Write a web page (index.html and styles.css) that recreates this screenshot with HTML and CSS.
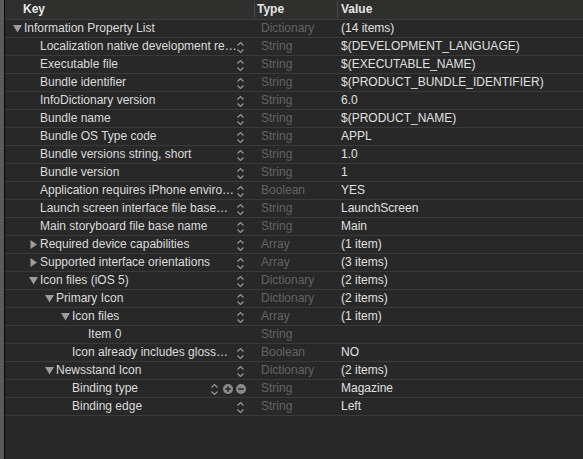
FILE: index.html
```html
<!DOCTYPE html>
<html>
<head>
<meta charset="utf-8">
<link rel="stylesheet" href="styles.css">
</head>
<body>
<div class="window">
  <div class="gutter"></div>
  <div class="plist">
    <div class="header">
      <div class="h-key">Key</div>
      <div class="h-type">Type</div>
      <div class="h-value">Value</div>
    </div>

    <div class="row">
      <div class="key lvl0"><svg class="disc" width="9" height="9" viewBox="0 0 9 9"><polygon points="0,1 9,1 4.5,8.5"/></svg><span class="name">Information Property List</span></div>
      <div class="type">Dictionary</div><div class="value">(14 items)</div>
    </div>
    <div class="row">
      <div class="key lvl1"><span class="disc"></span><span class="name">Localization native development re…</span><svg class="stepper" width="7" height="11" viewBox="0 0 7 11"><path d="M0.5 3.5 L3.5 0.6 L6.5 3.5 M0.5 7.5 L3.5 10.4 L6.5 7.5"/></svg></div>
      <div class="type">String</div><div class="value">$(DEVELOPMENT_LANGUAGE)</div>
    </div>
    <div class="row">
      <div class="key lvl1"><span class="disc"></span><span class="name">Executable file</span><svg class="stepper" width="7" height="11" viewBox="0 0 7 11"><path d="M0.5 3.5 L3.5 0.6 L6.5 3.5 M0.5 7.5 L3.5 10.4 L6.5 7.5"/></svg></div>
      <div class="type">String</div><div class="value">$(EXECUTABLE_NAME)</div>
    </div>
    <div class="row">
      <div class="key lvl1"><span class="disc"></span><span class="name">Bundle identifier</span><svg class="stepper" width="7" height="11" viewBox="0 0 7 11"><path d="M0.5 3.5 L3.5 0.6 L6.5 3.5 M0.5 7.5 L3.5 10.4 L6.5 7.5"/></svg></div>
      <div class="type">String</div><div class="value">$(PRODUCT_BUNDLE_IDENTIFIER)</div>
    </div>
    <div class="row">
      <div class="key lvl1"><span class="disc"></span><span class="name">InfoDictionary version</span><svg class="stepper" width="7" height="11" viewBox="0 0 7 11"><path d="M0.5 3.5 L3.5 0.6 L6.5 3.5 M0.5 7.5 L3.5 10.4 L6.5 7.5"/></svg></div>
      <div class="type">String</div><div class="value">6.0</div>
    </div>
    <div class="row">
      <div class="key lvl1"><span class="disc"></span><span class="name">Bundle name</span><svg class="stepper" width="7" height="11" viewBox="0 0 7 11"><path d="M0.5 3.5 L3.5 0.6 L6.5 3.5 M0.5 7.5 L3.5 10.4 L6.5 7.5"/></svg></div>
      <div class="type">String</div><div class="value">$(PRODUCT_NAME)</div>
    </div>
    <div class="row">
      <div class="key lvl1"><span class="disc"></span><span class="name">Bundle OS Type code</span><svg class="stepper" width="7" height="11" viewBox="0 0 7 11"><path d="M0.5 3.5 L3.5 0.6 L6.5 3.5 M0.5 7.5 L3.5 10.4 L6.5 7.5"/></svg></div>
      <div class="type">String</div><div class="value">APPL</div>
    </div>
    <div class="row">
      <div class="key lvl1"><span class="disc"></span><span class="name">Bundle versions string, short</span><svg class="stepper" width="7" height="11" viewBox="0 0 7 11"><path d="M0.5 3.5 L3.5 0.6 L6.5 3.5 M0.5 7.5 L3.5 10.4 L6.5 7.5"/></svg></div>
      <div class="type">String</div><div class="value">1.0</div>
    </div>
    <div class="row">
      <div class="key lvl1"><span class="disc"></span><span class="name">Bundle version</span><svg class="stepper" width="7" height="11" viewBox="0 0 7 11"><path d="M0.5 3.5 L3.5 0.6 L6.5 3.5 M0.5 7.5 L3.5 10.4 L6.5 7.5"/></svg></div>
      <div class="type">String</div><div class="value">1</div>
    </div>
    <div class="row">
      <div class="key lvl1"><span class="disc"></span><span class="name">Application requires iPhone enviro…</span><svg class="stepper" width="7" height="11" viewBox="0 0 7 11"><path d="M0.5 3.5 L3.5 0.6 L6.5 3.5 M0.5 7.5 L3.5 10.4 L6.5 7.5"/></svg></div>
      <div class="type">Boolean</div><div class="value">YES</div>
    </div>
    <div class="row">
      <div class="key lvl1"><span class="disc"></span><span class="name">Launch screen interface file base…</span><svg class="stepper" width="7" height="11" viewBox="0 0 7 11"><path d="M0.5 3.5 L3.5 0.6 L6.5 3.5 M0.5 7.5 L3.5 10.4 L6.5 7.5"/></svg></div>
      <div class="type">String</div><div class="value">LaunchScreen</div>
    </div>
    <div class="row">
      <div class="key lvl1"><span class="disc"></span><span class="name">Main storyboard file base name</span><svg class="stepper" width="7" height="11" viewBox="0 0 7 11"><path d="M0.5 3.5 L3.5 0.6 L6.5 3.5 M0.5 7.5 L3.5 10.4 L6.5 7.5"/></svg></div>
      <div class="type">String</div><div class="value">Main</div>
    </div>
    <div class="row">
      <div class="key lvl1"><svg class="disc" width="9" height="9" viewBox="0 0 9 9"><polygon points="1.5,0 8,4.5 1.5,9"/></svg><span class="name">Required device capabilities</span><svg class="stepper" width="7" height="11" viewBox="0 0 7 11"><path d="M0.5 3.5 L3.5 0.6 L6.5 3.5 M0.5 7.5 L3.5 10.4 L6.5 7.5"/></svg></div>
      <div class="type">Array</div><div class="value">(1 item)</div>
    </div>
    <div class="row">
      <div class="key lvl1"><svg class="disc" width="9" height="9" viewBox="0 0 9 9"><polygon points="1.5,0 8,4.5 1.5,9"/></svg><span class="name">Supported interface orientations</span><svg class="stepper" width="7" height="11" viewBox="0 0 7 11"><path d="M0.5 3.5 L3.5 0.6 L6.5 3.5 M0.5 7.5 L3.5 10.4 L6.5 7.5"/></svg></div>
      <div class="type">Array</div><div class="value">(3 items)</div>
    </div>
    <div class="row">
      <div class="key lvl1"><svg class="disc" width="9" height="9" viewBox="0 0 9 9"><polygon points="0,1 9,1 4.5,8.5"/></svg><span class="name">Icon files (iOS 5)</span><svg class="stepper" width="7" height="11" viewBox="0 0 7 11"><path d="M0.5 3.5 L3.5 0.6 L6.5 3.5 M0.5 7.5 L3.5 10.4 L6.5 7.5"/></svg></div>
      <div class="type">Dictionary</div><div class="value">(2 items)</div>
    </div>
    <div class="row">
      <div class="key lvl2"><svg class="disc" width="9" height="9" viewBox="0 0 9 9"><polygon points="0,1 9,1 4.5,8.5"/></svg><span class="name">Primary Icon</span><svg class="stepper" width="7" height="11" viewBox="0 0 7 11"><path d="M0.5 3.5 L3.5 0.6 L6.5 3.5 M0.5 7.5 L3.5 10.4 L6.5 7.5"/></svg></div>
      <div class="type">Dictionary</div><div class="value">(2 items)</div>
    </div>
    <div class="row">
      <div class="key lvl3"><svg class="disc" width="9" height="9" viewBox="0 0 9 9"><polygon points="0,1 9,1 4.5,8.5"/></svg><span class="name">Icon files</span><svg class="stepper" width="7" height="11" viewBox="0 0 7 11"><path d="M0.5 3.5 L3.5 0.6 L6.5 3.5 M0.5 7.5 L3.5 10.4 L6.5 7.5"/></svg></div>
      <div class="type">Array</div><div class="value">(1 item)</div>
    </div>
    <div class="row">
      <div class="key lvl4"><span class="disc"></span><span class="name">Item 0</span></div>
      <div class="type">String</div><div class="value"></div>
    </div>
    <div class="row">
      <div class="key lvl3"><span class="disc"></span><span class="name">Icon already includes gloss…</span><svg class="stepper" width="7" height="11" viewBox="0 0 7 11"><path d="M0.5 3.5 L3.5 0.6 L6.5 3.5 M0.5 7.5 L3.5 10.4 L6.5 7.5"/></svg></div>
      <div class="type">Boolean</div><div class="value">NO</div>
    </div>
    <div class="row">
      <div class="key lvl2"><svg class="disc" width="9" height="9" viewBox="0 0 9 9"><polygon points="0,1 9,1 4.5,8.5"/></svg><span class="name">Newsstand Icon</span><svg class="stepper" width="7" height="11" viewBox="0 0 7 11"><path d="M0.5 3.5 L3.5 0.6 L6.5 3.5 M0.5 7.5 L3.5 10.4 L6.5 7.5"/></svg></div>
      <div class="type">Dictionary</div><div class="value">(2 items)</div>
    </div>
    <div class="row">
      <div class="key lvl3 with-buttons"><span class="disc"></span><span class="name">Binding type</span><svg class="stepper" width="7" height="11" viewBox="0 0 7 11"><path d="M0.5 3.5 L3.5 0.6 L6.5 3.5 M0.5 7.5 L3.5 10.4 L6.5 7.5"/></svg><svg class="btn plus" width="10" height="10" viewBox="0 0 10 10"><circle cx="5" cy="5" r="5"/><path d="M2.2 5 H7.8 M5 2.2 V7.8"/></svg><svg class="btn minus" width="10" height="10" viewBox="0 0 10 10"><circle cx="5" cy="5" r="5"/><path d="M2.2 5 H7.8"/></svg></div>
      <div class="type">String</div><div class="value">Magazine</div>
    </div>
    <div class="row">
      <div class="key lvl3"><span class="disc"></span><span class="name">Binding edge</span><svg class="stepper" width="7" height="11" viewBox="0 0 7 11"><path d="M0.5 3.5 L3.5 0.6 L6.5 3.5 M0.5 7.5 L3.5 10.4 L6.5 7.5"/></svg></div>
      <div class="type">String</div><div class="value">Left</div>
    </div>
  </div>
</div>
</body>
</html>
```

FILE: styles.css
```css
html, body {
  margin: 0;
  padding: 0;
  background: #282828;
}
body {
  font-family: "Liberation Sans", Arial, sans-serif;
  font-size: 12px;
  color: #dedede;
}
.window {
  display: flex;
  width: 583px;
  height: 459px;
  overflow: hidden;
}
.gutter {
  width: 4px;
  background: #5b5b5b;
  border-right: 1px solid #0a0a0a;
  flex: none;
}
.plist {
  flex: 1;
  background: #282828;
}
.header {
  display: flex;
  align-items: center;
  height: 19px;
  background: #2f2f2e;
  border-bottom: 1px solid #3d3d3d;
  font-weight: bold;
  color: #e6e6e6;
}
.header > div {
  line-height: 14px;
  padding-bottom: 2px;
}
.h-key {
  width: 231px;
  padding-left: 18px;
}
.h-type {
  width: 80px;
  padding-left: 2px;
  border-left: 1px solid #4a4a4a;
}
.h-value {
  flex: 1;
  padding-left: 3px;
  border-left: 1px solid #4a4a4a;
}
.row {
  display: flex;
  height: 17px;
  line-height: 17px;
  border-bottom: 1px solid #3a3a3a;
  white-space: nowrap;
}
.key {
  display: flex;
  align-items: center;
  width: 249px;
  box-sizing: border-box;
  padding-right: 10px;
  color: #dcdcdc;
}
.lvl0 { padding-left: 8px; }
.lvl1 { padding-left: 24px; }
.lvl2 { padding-left: 40px; }
.lvl3 { padding-left: 56px; }
.lvl4 { padding-left: 72px; }
.disc {
  width: 9px;
  height: 9px;
  margin-right: 2px;
  flex: none;
  fill: #9c9c9c;
}
.name {
  flex: 1;
  overflow: hidden;
}
.stepper {
  flex: none;
  margin-top: 2px;
  fill: none;
  stroke: #9a9a9a;
  stroke-width: 1.2;
}
.with-buttons {
  padding-right: 8px;
}
.with-buttons .stepper {
  margin-right: 5px;
}
.btn {
  flex: none;
  fill: #8a8a8a;
}
.btn path {
  stroke: #2a2a2a;
  stroke-width: 1.6;
}
.plus {
  margin-right: 3px;
}
.type {
  width: 83px;
  box-sizing: border-box;
  padding-left: 7px;
  color: #636363;
}
.value {
  flex: 1;
  padding-left: 4px;
  color: #e0e0e0;
}
```
